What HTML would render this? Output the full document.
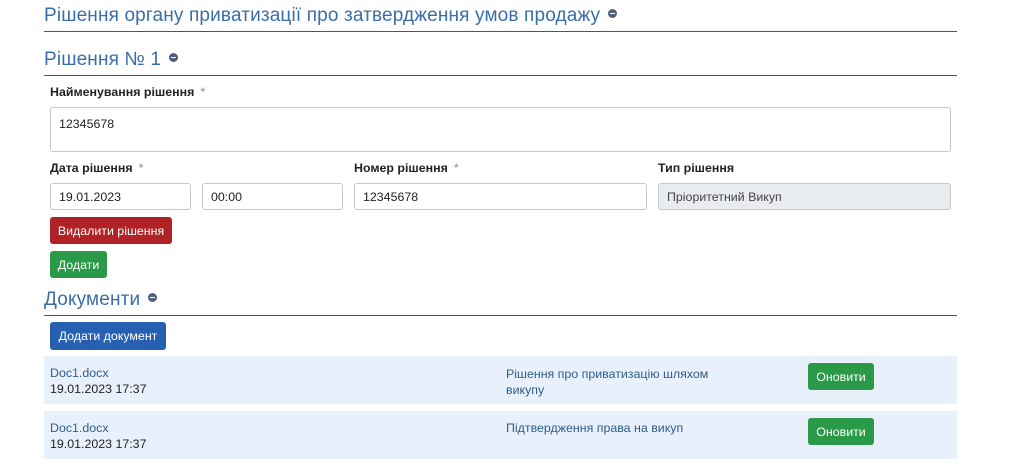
<!DOCTYPE html><html><head><meta charset="utf-8"><style>
body{margin:0;width:1019px;height:471px;background:#fff;font-family:"Liberation Sans","DejaVu Sans",sans-serif;position:relative;overflow:hidden;color:#222}
.a{position:absolute}
.h{color:#3a6ea8;font-size:19px;white-space:nowrap;letter-spacing:0.15px}
.ic{display:inline-block;width:9px;height:9px;border-radius:50%;background:#4d5f7c;vertical-align:middle;margin-left:8px;position:relative;top:-2px}
.ic:after{content:"";position:absolute;left:2px;top:4px;width:5px;height:1px;background:#fff}
.ln{height:1px;background:#2f5d8a;left:44px;width:913px}
.lb{font-size:12.4px;font-weight:bold;color:#222}
.lb i{font-style:normal;font-weight:normal;color:#888;margin-left:6px}
.in{border:1px solid #c8c8c8;border-radius:3px;box-sizing:border-box;font-size:12.4px;padding:0 8px;display:flex;align-items:center;height:27px}
.bt{border-radius:3px;color:#fff;font-size:12.4px;display:flex;align-items:center;justify-content:center;box-sizing:border-box}
.row{left:44px;width:913px;background:#e8f0fb;height:48px}
.f{font-size:12.4px;color:#2f5d8a}
.d{font-size:12.4px;color:#222}
</style></head><body>
<div class="a h" style="left:44px;top:5px">Рішення органу приватизації про затвердження умов продажу<span class="ic"></span></div>
<div class="a ln" style="top:31px"></div>
<div class="a h" style="left:44px;top:49px">Рішення № 1<span class="ic"></span></div>
<div class="a ln" style="top:75px"></div>
<div class="a lb" style="left:50px;top:85px">Найменування рішення<i>*</i></div>
<div class="a in" style="left:50px;top:107px;width:901px;height:45px;align-items:flex-start;padding-top:9px">12345678</div>
<div class="a lb" style="left:50px;top:161px">Дата рішення<i>*</i></div>
<div class="a lb" style="left:354px;top:161px">Номер рішення<i>*</i></div>
<div class="a lb" style="left:658px;top:161px">Тип рішення</div>
<div class="a in" style="left:50px;top:183px;width:141px">19.01.2023</div>
<div class="a in" style="left:202px;top:183px;width:141px">00:00</div>
<div class="a in" style="left:354px;top:183px;width:293px">12345678</div>
<div class="a in" style="left:658px;top:183px;width:293px;background:#e9ecef;color:#444">Пріоритетний Викуп</div>
<div class="a bt" style="left:50px;top:217px;width:122px;height:27px;background:#b02226">Видалити рішення</div>
<div class="a bt" style="left:50px;top:251px;width:57px;height:27px;background:#2a9a48">Додати</div>
<div class="a h" style="left:44px;top:289px">Документи<span class="ic"></span></div>
<div class="a ln" style="top:315px"></div>
<div class="a bt" style="left:50px;top:322px;width:116px;height:28px;background:#2760b0">Додати документ</div>
<div class="a row" style="top:356px"></div>
<div class="a f" style="left:50px;top:366px">Doc1.docx</div>
<div class="a d" style="left:50px;top:382px">19.01.2023 17:37</div>
<div class="a f" style="left:506px;top:366px;line-height:16px">Рішення про приватизацію шляхом<br>викупу</div>
<div class="a bt" style="left:808px;top:363px;width:66px;height:27px;background:#2a9a48">Оновити</div>
<div class="a row" style="top:411px"></div>
<div class="a f" style="left:50px;top:421px">Doc1.docx</div>
<div class="a d" style="left:50px;top:437px">19.01.2023 17:37</div>
<div class="a f" style="left:506px;top:421px">Підтвердження права на викуп</div>
<div class="a bt" style="left:808px;top:418px;width:66px;height:27px;background:#2a9a48">Оновити</div>
</body></html>
